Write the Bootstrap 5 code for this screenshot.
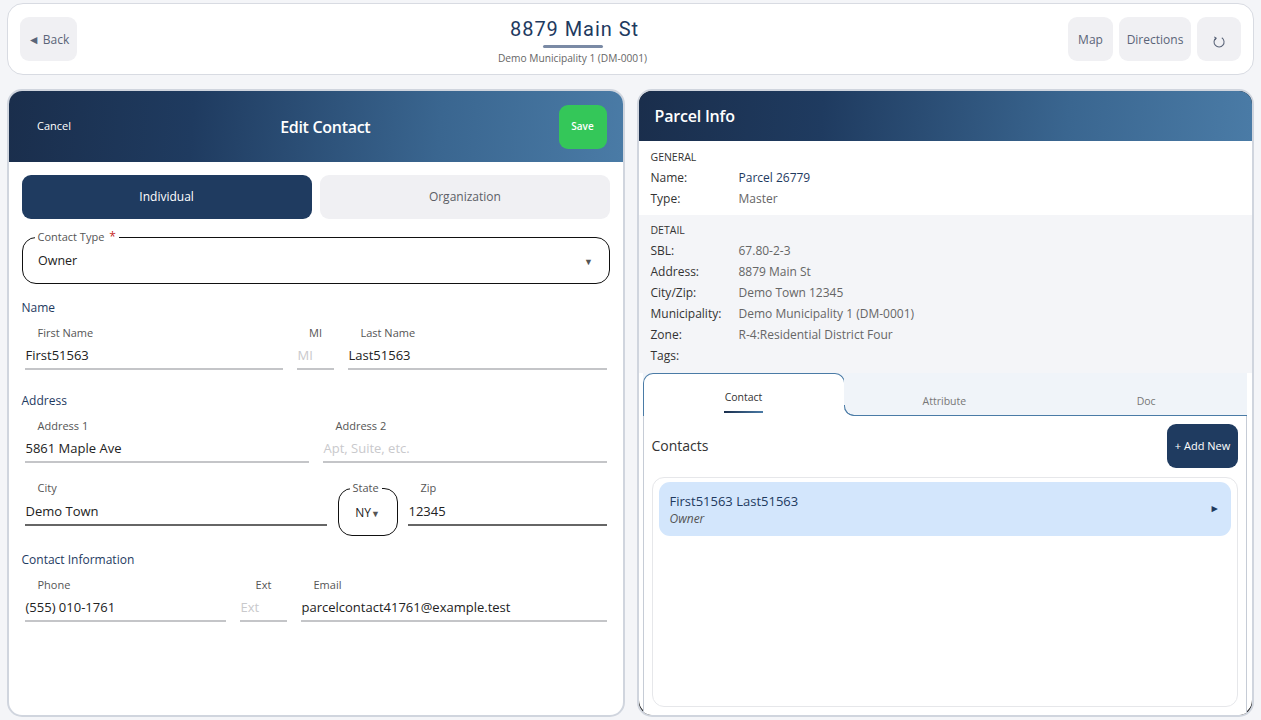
<!DOCTYPE html>
<html lang="en">
<head>
  <meta charset="UTF-8" />
  <meta name="viewport" content="width=device-width, initial-scale=1.0"/>
  <title>8879 Main St</title>
  <link href="https://cdn.jsdelivr.net/npm/bootstrap@5.3.2/dist/css/bootstrap.min.css" rel="stylesheet" />
  <style>
    html, body { height: 720px; overflow: hidden; }
    body { background: #f4f5f8; font-family: "Open Sans", "Liberation Sans", sans-serif; font-size: 12.5px; color: #333; }
    .page-wrap { padding: 3px 7px 3px 7px; height: 720px; display: flex; flex-direction: column; gap: 14px; }
    .top-bar { height: 72px; background: #fff; border: 1.5px solid #d8dbe2; border-radius: 16px; padding: 0 12px; flex: none; }
    .grey-btn { background: #f0f0f3; border: 0; border-radius: 9px; height: 44px; color: #5a6478; font-size: 12px; display: flex; align-items: center; justify-content: center; padding: 1px 0 0 0; }
    .back-btn { width: 57px; flex: none; }
    .title-box { text-align: center; margin-top: 2px; }
    .title-main { font-family: Roboto, sans-serif; font-size: 20px; letter-spacing: .95px; color: #1e3a5f; line-height: 26px; padding-left: 4px; }
    .title-rule { width: 60px; height: 3px; border-radius: 2px; background: #7a8aa5; margin: 3px auto 3px; }
    .title-sub { font-size: 10.2px; color: #666; line-height: 14px; }
    .panes { flex: 1; min-height: 0; gap: 12px; }
    .pane { flex: 1 1 0; background: #fff; border: 2.5px solid #d0d5de; border-radius: 15px; overflow: hidden; display: flex; flex-direction: column; }
    .pane-dark { background: #111; }
    .pane-head { background: linear-gradient(95deg, #1a2e4c 0%, #1f3b60 30%, #3a6690 70%, #4a7ba6 100%); color: #fff; flex: none; }
    .head-left { height: 71px; padding: 0 16px 0 0; }
    .head-title { font-size: 16px; font-weight: 600; letter-spacing: -.3px; }
    .cancel-txt { font-size: 11px; width: 83px; padding-left: 28px; flex: none; }
    .save-btn { background: #34c759; color: #fff; border: 0; border-radius: 9px; width: 48px; height: 44px; font-size: 10px; font-weight: 600; padding: 0; flex: none; }
    .head-right { height: 50px; padding: 0 16px; font-size: 16px; font-weight: 600; letter-spacing: -.2px; display: flex; align-items: center; }
    .form-area { padding: 13px 12.5px 0 12.5px; }
    .seg-row { gap: 8px; }
    .seg-btn { flex: 1 1 0; height: 44px; border: 0; border-radius: 9px; font-size: 12px; background: #f0f0f3; color: #5c5f66; padding: 0; }
    .seg-btn.is-on { background: #1f3b60; color: #fff; }
    fieldset.out-box { border: 1.5px solid #111; border-radius: 14px; min-width: 0; margin: 0; padding: 0; }
    fieldset.out-box legend { float: none; width: auto; font-size: 11px; line-height: 12px; color: #555; margin: 0 0 0 12px; padding: 0 3px; }
    .req-star { color: #c62828; font-size: 12px; margin-left: 2px; }
    fieldset.type-box { height: 53px; margin-top: 12px; }
    .type-val { padding: 9px 16px 0 15.5px; font-size: 12.5px; color: #222; }
    .caret-mark { font-size: 9px; color: #555; }
    .sec-label { color: #1e3a5f; font-size: 12px; line-height: 16px; }
    .fld { min-width: 0; }
    .fld-label { font-size: 11px; line-height: 14px; color: #555; padding-left: 12.5px; }
    .fld-val { font-size: 13px; line-height: 17px; color: #222; height: 30px; padding: 7px 0 0 0.5px; border-bottom: 2px solid #c4c5c8; white-space: nowrap; }
    .fld-val.is-empty { color: #c9c9cc; }
    .fld-val.is-dark { border-bottom-color: #666; height: 31px; padding-top: 8px; }
    .fld-row { gap: 14px; margin-left: 3.5px; margin-right: 3.5px; }
    fieldset.state-box { width: 60px; flex: none; height: 54px; margin: 1px -3.5px 0 -3.5px; }
    fieldset.state-box legend { margin-left: 11px; }
    .state-val { font-size: 12px; color: #222; padding-top: 10px; text-align: center; }
    .info-block { padding: 9px 12px 0 12px; font-size: 12px; }
    .info-block.block-white { height: 74px; background: #fff; }
    .info-block.block-grey { height: 158px; padding-top: 8px; background: #f4f5f8; }
    .info-head { font-size: 10.5px; line-height: 14px; color: #333; margin-bottom: 3px; }
    .info-line { display: flex; line-height: 21px; color: #666; font-size: 12px; }
    .info-key { width: 88px; flex: none; color: #333; font-size: 12px; }
    .info-link { color: #1e3a5f; }
    .tab-area { flex: 1; min-height: 0; padding: 0 5px 0 4px; display: flex; flex-direction: column; background: #fff; border-radius: 0 0 15px 15px; }
    .tab-strip { height: 43px; flex: none; display: flex; background: linear-gradient(#4a7ba6, #4a7ba6) no-repeat 0 33px / 1px 10px, linear-gradient(#fff, #fff) no-repeat 0 33px / 212px 10px, #f0f4f9; }
    .tab-on { width: 202px; height: 33px; flex: none; background: #fff; border: 1px solid #4a7ba6; border-bottom: 0; border-radius: 10px 10px 0 0; text-align: center; font-size: 10.5px; color: #333; padding-top: 16px; }
    .tab-mark { display: block; width: 39px; height: 2px; margin: 5px auto 0; background: linear-gradient(90deg, #1a2e4c, #4a7ba6); }
    .tab-off { flex: 1 1 0; text-align: center; font-size: 10.5px; color: #777; padding-top: 21px; border-bottom: 1px solid #4a7ba6; background: #f0f4f9; }
    .tab-next { position: relative; border-bottom-left-radius: 10px; margin-left: -1px; }
    .tab-next::before { content: ""; position: absolute; left: 0; bottom: -1px; width: 11px; height: 11px; border-left: 1px solid #4a7ba6; border-bottom: 1px solid #4a7ba6; border-bottom-left-radius: 10px; }
    .tab-body { flex: 1; min-height: 0; background: #fff; border-left: 1px solid #c6ccd6; border-right: 1px solid #c6ccd6; padding: 8px 8px 8px 8px; display: flex; flex-direction: column; }
    .contacts-title { font-size: 14px; color: #333; margin-top: -1px; }
    .add-btn { background: #1f3b60; color: #fff; border: 0; border-radius: 9px; width: 71px; height: 44px; font-size: 11px; padding: 0; }
    .list-frame { flex: 1; min-height: 0; margin-top: 9px; border: 1px solid #e6e7ea; border-radius: 12px; padding: 4px 6px; }
    .contact-row { background: #d3e6fc; border-radius: 11px; height: 54px; padding: 9px 11px; }
    .contact-name { font-size: 13px; line-height: 18px; color: #1e3a5f; }
    .contact-role { font-size: 12px; line-height: 15px; font-style: italic; color: #555; margin-top: 1px; }
    .row-arrow { font-size: 10.5px; color: #1e3a5f; }
    .refresh-ico { margin-top: 5px; }
  </style>
</head>
<body>
  <div class="page-wrap">
    <!-- top bar -->
    <div class="top-bar d-flex align-items-center">
      <button class="grey-btn back-btn" type="button">◄ Back</button>
      <div class="title-box flex-fill">
        <div class="title-main">8879 Main St</div>
        <div class="title-rule"></div>
        <div class="title-sub">Demo Municipality 1 (DM-0001)</div>
      </div>
      <div class="d-flex gap-2">
        <button class="grey-btn" style="width:45px" type="button">Map</button>
        <button class="grey-btn" style="width:72px;margin-left:-2px" type="button">Directions</button>
        <button class="grey-btn" style="width:44px;margin-left:-2px" type="button">
          <svg class="refresh-ico" width="14" height="14" viewBox="0 0 12 12" fill="none" stroke="#5a6478" stroke-width=".9"><path d="M3.4 2.6A4.3 4.3 0 1 0 8.4 2.4"/><path d="M1.9 1.6 3.6 2.7 2.6 4.3"/></svg>
        </button>
      </div>
    </div>

    <div class="panes d-flex">
      <!-- edit contact -->
      <div class="pane">
        <div class="pane-head head-left d-flex align-items-center">
          <span class="cancel-txt">Cancel</span>
          <div class="head-title flex-fill text-center">Edit Contact</div>
          <button class="save-btn" type="button">Save</button>
        </div>
        <div class="form-area">
          <div class="seg-row d-flex">
            <button class="seg-btn is-on" type="button">Individual</button>
            <button class="seg-btn" type="button">Organization</button>
          </div>

          <fieldset class="out-box type-box">
            <legend>Contact Type <span class="req-star">*</span></legend>
            <div class="type-val d-flex justify-content-between align-items-center">
              <span>Owner</span><span class="caret-mark">▼</span>
            </div>
          </fieldset>

          <div class="sec-label" style="margin-top:16px">Name</div>
          <div class="d-flex fld-row" style="margin-top:10px">
            <div class="fld" style="width:258px"><div class="fld-label">First Name</div><div class="fld-val">First51563</div></div>
            <div class="fld" style="width:37px"><div class="fld-label text-center p-0">MI</div><div class="fld-val is-empty">MI</div></div>
            <div class="fld flex-fill"><div class="fld-label">Last Name</div><div class="fld-val">Last51563</div></div>
          </div>

          <div class="sec-label" style="margin-top:23px">Address</div>
          <div class="d-flex fld-row" style="margin-top:10px">
            <div class="fld" style="width:284px"><div class="fld-label">Address 1</div><div class="fld-val">5861 Maple Ave</div></div>
            <div class="fld flex-fill"><div class="fld-label">Address 2</div><div class="fld-val is-empty">Apt, Suite, etc.</div></div>
          </div>

          <div class="d-flex fld-row" style="margin-top:18px">
            <div class="fld" style="width:302px"><div class="fld-label">City</div><div class="fld-val is-dark">Demo Town</div></div>
            <fieldset class="out-box state-box">
              <legend>State</legend>
              <div class="state-val">NY<span class="caret-mark">▼</span></div>
            </fieldset>
            <div class="fld flex-fill"><div class="fld-label">Zip</div><div class="fld-val is-dark">12345</div></div>
          </div>

          <div class="sec-label" style="margin-top:16px">Contact Information</div>
          <div class="d-flex fld-row" style="margin-top:10px">
            <div class="fld" style="width:201px"><div class="fld-label">Phone</div><div class="fld-val">(555) 010-1761</div></div>
            <div class="fld" style="width:47px"><div class="fld-label text-center p-0">Ext</div><div class="fld-val is-empty">Ext</div></div>
            <div class="fld flex-fill"><div class="fld-label">Email</div><div class="fld-val">parcelcontact41761@example.test</div></div>
          </div>
        </div>
      </div>

      <!-- parcel info -->
      <div class="pane pane-dark">
        <div class="pane-head head-right">Parcel Info</div>
        <div class="info-block block-white">
          <div class="info-head">GENERAL</div>
          <div class="info-line"><span class="info-key">Name:</span><span class="info-link">Parcel 26779</span></div>
          <div class="info-line"><span class="info-key">Type:</span><span>Master</span></div>
        </div>
        <div class="info-block block-grey">
          <div class="info-head">DETAIL</div>
          <div class="info-line"><span class="info-key">SBL:</span><span>67.80-2-3</span></div>
          <div class="info-line"><span class="info-key">Address:</span><span>8879 Main St</span></div>
          <div class="info-line"><span class="info-key">City/Zip:</span><span>Demo Town 12345</span></div>
          <div class="info-line"><span class="info-key">Municipality:</span><span>Demo Municipality 1 (DM-0001)</span></div>
          <div class="info-line"><span class="info-key">Zone:</span><span>R-4:Residential District Four</span></div>
          <div class="info-line"><span class="info-key">Tags:</span></div>
        </div>
        <div class="tab-area">
          <div class="tab-strip">
            <div class="tab-on">Contact<span class="tab-mark"></span></div>
            <div class="tab-off tab-next">Attribute</div>
            <div class="tab-off">Doc</div>
          </div>
          <div class="tab-body">
            <div class="d-flex justify-content-between align-items-center">
              <span class="contacts-title">Contacts</span>
              <button class="add-btn" type="button">+ Add New</button>
            </div>
            <div class="list-frame">
              <div class="contact-row d-flex justify-content-between align-items-center">
                <div>
                  <div class="contact-name">First51563 Last51563</div>
                  <div class="contact-role">Owner</div>
                </div>
                <span class="row-arrow">►</span>
              </div>
            </div>
          </div>
        </div>
      </div>
    </div>
  </div>
</body>
</html>
